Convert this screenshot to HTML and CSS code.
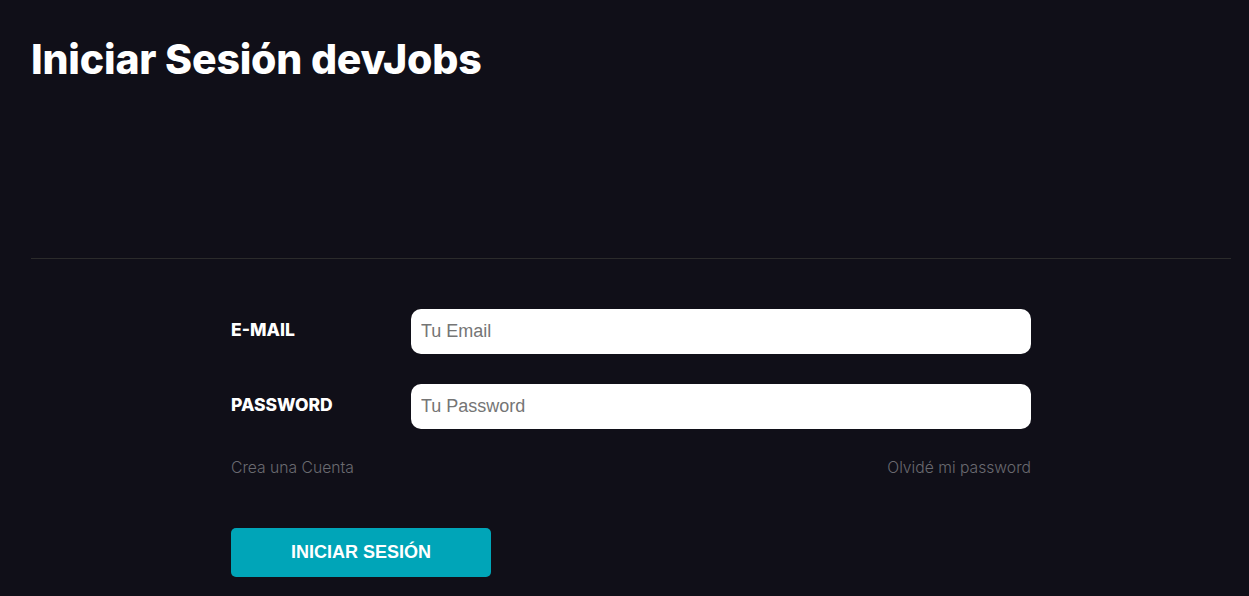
FILE: index.html
```html
<!DOCTYPE html>
<html lang="es">
<head>
<meta charset="utf-8">
<title>Iniciar Sesión devJobs</title>
<link rel="stylesheet" href="styles.css">
</head>
<body>
<div class="container">
  <header class="header">
    <h1 class="title">Iniciar Sesión devJobs</h1>
  </header>
  <main class="main">
    <form class="form">
      <div class="field">
        <label class="label" for="email">E-MAIL</label>
        <input class="input" id="email" type="email" placeholder="Tu Email">
      </div>
      <div class="field">
        <label class="label" for="password">PASSWORD</label>
        <input class="input" id="password" type="password" placeholder="Tu Password">
      </div>
      <div class="links">
        <a class="link" href="#">Crea una Cuenta</a>
        <a class="link" href="#">Olvidé mi password</a>
      </div>
      <button class="button" type="button">INICIAR SESIÓN</button>
    </form>
  </main>
</div>
</body>
</html>
```
FILE: styles.css
```css
* { box-sizing: border-box; }
html, body { margin: 0; padding: 0; }
body {
  background: #100f18;
  color: #fff;
  font-family: Inter, "Noto Sans", sans-serif;
}
.container {
  width: 1200px;
  margin-left: 31px;
}
.header {
  height: 259px;
  border-bottom: 1px solid #2b2b2b;
  padding-top: 36px;
}
.title {
  margin: 0;
  font-size: 41px;
  font-weight: 800;
  line-height: 46px;
  letter-spacing: -0.2px;
}
.main {
  padding-top: 50px;
}
.form {
  width: 800px;
  margin: 0 auto;
  display: flex;
  flex-direction: column;
}
.field {
  display: flex;
  align-items: flex-start;
  margin-bottom: 30px;
}
.label {
  width: 180px;
  font-weight: 800;
  font-size: 17.5px;
  line-height: 20px;
  padding-top: 11px;
}
.input {
  width: 620px;
  height: 45px;
  border: none;
  border-radius: 10px;
  padding: 0 10px;
  font-family: "Liberation Sans", Arial, sans-serif;
  font-size: 18px;
  color: #333;
  background: #fff;
  outline: none;
}
.input::placeholder { color: #757575; }
.links {
  display: flex;
  justify-content: space-between;
  margin-top: -1px;
}
.link {
  color: #6a6a70;
  text-decoration: none;
  font-size: 15.7px;
  font-weight: 300;
  line-height: 20px;
}
.button {
  margin-top: 50px;
  width: 260px;
  height: 49px;
  border: none;
  border-radius: 5px;
  background: #00a5b8;
  color: #fff;
  font-family: "Liberation Sans", Arial, sans-serif;
  font-weight: 700;
  font-size: 18px;
  cursor: pointer;
}
```
